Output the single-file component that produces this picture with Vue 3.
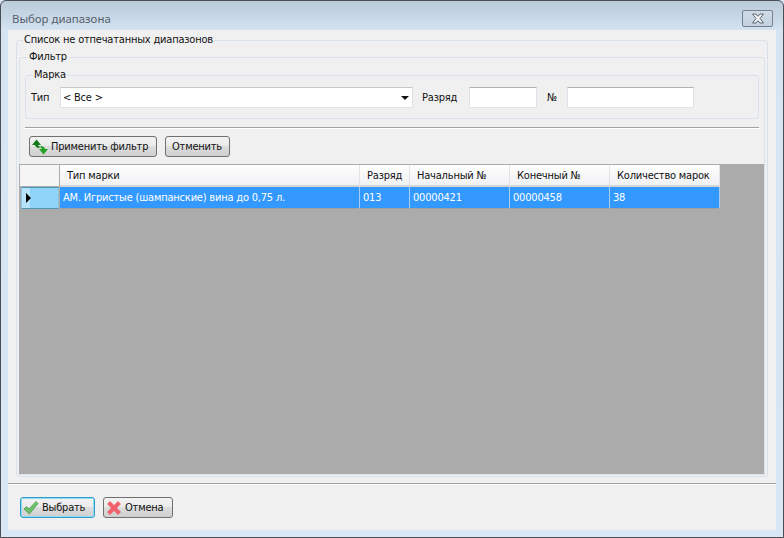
<script setup>
const columns = [
  { title: 'Тип марки', width: 300 },
  { title: 'Разряд', width: 50 },
  { title: 'Начальный №', width: 100 },
  { title: 'Конечный №', width: 100 },
  { title: 'Количество марок', width: 110 }
]
const row = ['АМ. Игристые (шампанские) вина до 0,75 л.', '013', '00000421', '00000458', '38']
</script>

<template>
  <div class="window">
    <div class="titlebar">
      <span class="title">Выбор диапазона</span>
      <button class="close">
        <svg width="14" height="11" viewBox="0 0 14 11">
          <path d="M1.500 1h3.500l2 2.300L9 1h3.500L9 5.500l3.500 4.500H9L7 7.700 5 10H1.500L5 5.500z" fill="#f2f4f7" stroke="#5c6470" stroke-width="1"/>
        </svg>
      </button>
    </div>

    <div class="client">
      <div class="main">
        <fieldset class="group outer">
          <legend>Список не отпечатанных диапазонов</legend>
          <fieldset class="group filter">
            <legend>Фильтр</legend>
            <fieldset class="group mark">
              <legend>Марка</legend>
              <div class="fields">
                <label class="lbl-type">Тип</label>
                <div class="select">
                  <span>&lt; Все &gt;</span>
                  <i class="arrow"></i>
                </div>
                <label class="lbl-rank">Разряд</label>
                <input class="input rank" />
                <label class="lbl-num">№</label>
                <input class="input num" />
              </div>
            </fieldset>
            <div class="sep"></div>
            <div class="actions">
              <button class="btn apply">
                <svg width="16" height="16" viewBox="0 0 16 16">
                  <path d="M4.500.500 0 6h3C3.200 7.500 4.500 9 7.500 9V7C6.500 7 6.200 6.600 6 6h3z" fill="#127a17"/>
                  <path d="M11.500 15.500 16 10h-3C12.800 8.500 11.500 7 8.500 7v2c1 0 1.300.4 1.500 1H7z" fill="#22a226"/>
                </svg>
                <span>Применить фильтр</span>
              </button>
              <button class="btn undo">Отменить</button>
            </div>
          </fieldset>

          <div class="grid">
            <div class="grid-head">
              <div class="corner"></div>
              <div v-for="col in columns" :key="col.title" class="th" :style="{ width: col.width + 'px' }">{{ col.title }}</div>
            </div>
            <div class="grid-row">
              <div class="row-head"><i class="marker"></i></div>
              <div v-for="(cell, i) in row" :key="i" class="td" :style="{ width: columns[i].width + 'px' }">{{ cell }}</div>
            </div>
          </div>
        </fieldset>
      </div>

      <div class="footer">
        <button class="btn ok">
          <svg width="16" height="16" viewBox="0 0 16 16">
            <path d="M1 9l2.500-2.500L6 9l7-7.500 2 2L6.500 14z" fill="#6cc06a" stroke="#4c9a52" stroke-width=".8"/>
          </svg>
          <span>Выбрать</span>
        </button>
        <button class="btn cancel">
          <svg width="16" height="16" viewBox="0 0 16 16">
            <path d="M1.500 4 4 1.500 8 5.500l4-4L14.500 4l-4 4 4 4-2.500 2.500-4-4-4 4L1.500 12l4-4z" fill="#f4606a" stroke="#e0505a" stroke-width=".6"/>
          </svg>
          <span>Отмена</span>
        </button>
      </div>
    </div>
  </div>
</template>

<style scoped>
.window {
  box-sizing: border-box;
  width: 784px;
  height: 538px;
  display: flex;
  flex-direction: column;
  border: 1px solid #4a4f55;
  border-radius: 6px 6px 0 0;
  background: linear-gradient(#b9cad9, #d5e3f2 30px, #d9e6f4);
  font-family: "DejaVu Sans", sans-serif;
  font-stretch: condensed;
  font-size: 11px;
  letter-spacing: -0.2px;
  color: #111;
}
.titlebar {
  height: 29px;
  flex: none;
  display: flex;
  align-items: flex-start;
  justify-content: space-between;
  padding-left: 11px;
}
.title {
  margin-top: 10px;
  color: #56606b;
  font-family: "Noto Sans", sans-serif;
  font-stretch: normal;
  font-size: 11.4px;
  letter-spacing: 0;
}
.close {
  width: 31px;
  height: 17px;
  margin: 9px 10px 0 0;
  padding: 0;
  display: flex;
  align-items: center;
  justify-content: center;
  border: 1px solid #76808f;
  border-radius: 2px;
  background: linear-gradient(#cfdbe7, #c3d1e0);
}
.client {
  flex: 1;
  margin: 0 7px 7px;
  display: flex;
  flex-direction: column;
  background: #f0f0f0;
}
.main {
  flex: 1;
  padding: 0 8px;
  border-bottom: 1px solid #a0a0a0;
  box-shadow: 0 1px 0 #fff;
}
.group {
  margin: 0;
  min-width: 0;
  border: 1px solid #d9e1ea;
  border-radius: 3px;
}
.group legend {
  padding: 0 1px;
  margin-left: 4px;
  line-height: 14px;
}
.outer {
  box-sizing: border-box;
  height: 444px;
  margin-top: 3px;
  padding: 3px 2px 2px;
}
.filter {
  padding: 4px 5px 7px;
  border-bottom: none;
}
.filter > legend {
  margin-left: 3px;
}
.mark {
  box-sizing: border-box;
  height: 51px;
  padding: 0 5px;
}
.mark > legend {
  margin-left: 2px;
}
.fields {
  display: flex;
  align-items: center;
  height: 21px;
  margin-top: 5px;
}
.lbl-type { width: 29px; }
.select {
  box-sizing: border-box;
  width: 353px;
  height: 21px;
  display: flex;
  align-items: center;
  justify-content: space-between;
  padding: 0 3px 0 2px;
  background: #fff;
  border: 1px solid #dde3ea;
  border-top-color: #c4c8cc;
}
.arrow {
  width: 0;
  height: 0;
  border: 4px solid transparent;
  border-top-color: #111;
  border-bottom: none;
}
.lbl-rank { margin-left: 9px; width: 47px; }
.input {
  box-sizing: border-box;
  height: 21px;
  padding: 0;
  background: #fff;
  border: 1px solid #dde3ea;
  border-top-color: #aeb2b6;
  outline: none;
}
.rank { width: 68px; }
.lbl-num { margin-left: 10px; width: 20px; }
.num { width: 127px; }
.sep {
  height: 1px;
  margin: 8px 0 0;
  background: #a0a0a0;
  box-shadow: 0 1px 0 #fff;
}
.actions {
  display: flex;
  gap: 8px;
  margin-top: 8px;
  padding-left: 4px;
}
.btn {
  box-sizing: border-box;
  height: 21px;
  display: flex;
  align-items: center;
  gap: 3px;
  padding: 0 0 0 2px;
  font: inherit;
  letter-spacing: inherit;
  color: #111;
  white-space: nowrap;
  border: 1px solid #707070;
  border-radius: 3px;
  background: linear-gradient(#f2f2f2 0, #ebebeb 45%, #dddddd 50%, #cfcfcf 100%);
}
.apply { width: 128px; }
.undo { width: 65px; padding: 0 1px 0 0; justify-content: center; }
.grid {
  box-sizing: border-box;
  height: 311px;
  background: #ababab;
  border: 1px solid #ababab;
  border-right-color: #dde3ea;
  border-bottom-color: #dde3ea;
}
.grid-head, .grid-row {
  display: flex;
}
.grid-head {
  height: 22px;
}
.corner {
  box-sizing: border-box;
  width: 40px;
  flex: none;
  background: #f5f5f5;
  border-right: 1px solid #ababab;
  border-bottom: 1px solid #ababab;
}
.th {
  box-sizing: border-box;
  padding-left: 7px;
  line-height: 21px;
  border-right: 1px solid #e3e3e3;
  border-bottom: 2px solid #d5d5d5;
  background: linear-gradient(#fff, #f0f1f3);
  white-space: nowrap;
}
.grid-row {
  height: 22px;
}
.row-head {
  box-sizing: border-box;
  width: 38px;
  margin: 0 1px;
  flex: none;
  display: flex;
  align-items: center;
  padding-left: 4px;
  background: linear-gradient(90deg, #b9e2fb 0 8px, #8fd4f8 8px);
  border: 1px solid #8fc4de;
  border-top-color: #4f97b8;
  border-bottom-color: #4f97b8;
}
.marker {
  width: 0;
  height: 0;
  border: 5px solid transparent;
  border-left-color: #000;
  border-right: none;
}
.td {
  box-sizing: border-box;
  padding-left: 3px;
  line-height: 21px;
  color: #fff;
  background: #3399ff;
  border-right: 1px solid #a9cdf3;
  border-bottom: 1px solid #a0a0a0;
  white-space: nowrap;
}
.footer {
  height: 46px;
  flex: none;
  display: flex;
  align-items: flex-start;
  gap: 8px;
  padding: 13px 0 0 12px;
  box-sizing: border-box;
}
.ok {
  width: 75px;
  border-color: #2e9dc9;
  box-shadow: inset 0 0 0 1px #8fdcf5;
}
.cancel { width: 70px; }
</style>

<style>
html, body { margin: 0; background: #d9e6f4; }
</style>
